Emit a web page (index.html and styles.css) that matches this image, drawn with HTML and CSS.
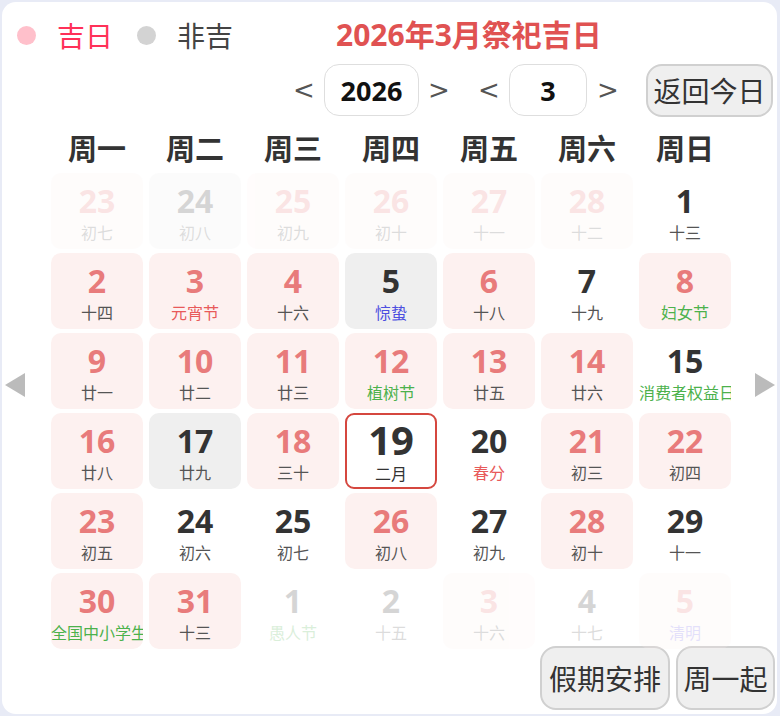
FILE: index.html
```html
<!DOCTYPE html>
<html lang="zh">
<head>
<meta charset="utf-8">
<link rel="stylesheet" href="styles.css">
</head>
<body>
<div class="panel">
  <div class="topbar">
    <span class="dot dot-good"></span><span class="legend legend-good">吉日</span>
    <span class="dot dot-bad"></span><span class="legend legend-bad">非吉</span>
    <span class="title">2026年3月祭祀吉日</span>
  </div>
  <div class="nav">
    <span class="chev chev-a">&lt;</span>
    <span class="box box-year">2026</span>
    <span class="chev chev-b">&gt;</span>
    <span class="chev chev-c">&lt;</span>
    <span class="box box-month">3</span>
    <span class="chev chev-d">&gt;</span>
    <span class="btn btn-today">返回今日</span>
  </div>
  <div class="weekdays">
    <span>周一</span><span>周二</span><span>周三</span><span>周四</span><span>周五</span><span>周六</span><span>周日</span>
  </div>
  <div class="body">
    <div class="side side-left">
      <svg width="20" height="24" viewBox="0 0 20 24"><polygon points="20,0 20,24 0,12" fill="#bbbbbb"/></svg>
    </div>
    <div class="grid">
      <div class="cell red faded"><div class="num">23</div><div class="lunar">初七</div></div>
      <div class="cell gray faded"><div class="num">24</div><div class="lunar">初八</div></div>
      <div class="cell red faded"><div class="num">25</div><div class="lunar">初九</div></div>
      <div class="cell red faded"><div class="num">26</div><div class="lunar">初十</div></div>
      <div class="cell red faded"><div class="num">27</div><div class="lunar">十一</div></div>
      <div class="cell red faded"><div class="num">28</div><div class="lunar">十二</div></div>
      <div class="cell"><div class="num">1</div><div class="lunar">十三</div></div>

      <div class="cell red"><div class="num">2</div><div class="lunar">十四</div></div>
      <div class="cell red"><div class="num">3</div><div class="lunar fest-red">元宵节</div></div>
      <div class="cell red"><div class="num">4</div><div class="lunar">十六</div></div>
      <div class="cell gray"><div class="num">5</div><div class="lunar fest-blue">惊蛰</div></div>
      <div class="cell red"><div class="num">6</div><div class="lunar">十八</div></div>
      <div class="cell"><div class="num">7</div><div class="lunar">十九</div></div>
      <div class="cell red"><div class="num">8</div><div class="lunar fest-green">妇女节</div></div>

      <div class="cell red"><div class="num">9</div><div class="lunar">廿一</div></div>
      <div class="cell red"><div class="num">10</div><div class="lunar">廿二</div></div>
      <div class="cell red"><div class="num">11</div><div class="lunar">廿三</div></div>
      <div class="cell red"><div class="num">12</div><div class="lunar fest-green">植树节</div></div>
      <div class="cell red"><div class="num">13</div><div class="lunar">廿五</div></div>
      <div class="cell red"><div class="num">14</div><div class="lunar">廿六</div></div>
      <div class="cell"><div class="num">15</div><div class="lunar fest-green">消费者权益日</div></div>

      <div class="cell red"><div class="num">16</div><div class="lunar">廿八</div></div>
      <div class="cell gray"><div class="num">17</div><div class="lunar">廿九</div></div>
      <div class="cell red"><div class="num">18</div><div class="lunar">三十</div></div>
      <div class="cell today"><div class="num">19</div><div class="lunar">二月</div></div>
      <div class="cell"><div class="num">20</div><div class="lunar fest-red">春分</div></div>
      <div class="cell red"><div class="num">21</div><div class="lunar">初三</div></div>
      <div class="cell red"><div class="num">22</div><div class="lunar">初四</div></div>

      <div class="cell red"><div class="num">23</div><div class="lunar">初五</div></div>
      <div class="cell"><div class="num">24</div><div class="lunar">初六</div></div>
      <div class="cell"><div class="num">25</div><div class="lunar">初七</div></div>
      <div class="cell red"><div class="num">26</div><div class="lunar">初八</div></div>
      <div class="cell"><div class="num">27</div><div class="lunar">初九</div></div>
      <div class="cell red"><div class="num">28</div><div class="lunar">初十</div></div>
      <div class="cell"><div class="num">29</div><div class="lunar">十一</div></div>

      <div class="cell red"><div class="num">30</div><div class="lunar fest-green">全国中小学生安全教育日</div></div>
      <div class="cell red"><div class="num">31</div><div class="lunar">十三</div></div>
      <div class="cell faded"><div class="num">1</div><div class="lunar fest-green">愚人节</div></div>
      <div class="cell faded"><div class="num">2</div><div class="lunar">十五</div></div>
      <div class="cell red faded"><div class="num">3</div><div class="lunar">十六</div></div>
      <div class="cell faded"><div class="num">4</div><div class="lunar">十七</div></div>
      <div class="cell red faded"><div class="num">5</div><div class="lunar fest-purple">清明</div></div>
    </div>
    <div class="side side-right">
      <svg width="20" height="24" viewBox="0 0 20 24"><polygon points="0,0 0,24 20,12" fill="#bbbbbb"/></svg>
    </div>
  </div>
  <div class="footer">
    <span class="btn btn-holiday">假期安排</span>
    <span class="btn btn-week">周一起</span>
  </div>
</div>
</body>
</html>
```

FILE: styles.css
```css
* { box-sizing: border-box; }
html, body { margin: 0; padding: 0; }
body {
  background: #e8ebf6;
  width: 780px;
  height: 716px;
  padding: 2px 3px 2px 2px;
  font-family: "Noto Sans CJK SC", "Noto Sans", sans-serif;
  color: #333;
}
.panel {
  background: #ffffff;
  width: 775px;
  height: 712px;
  border-radius: 14px;
  overflow: hidden;
}
.topbar {
  display: flex;
  align-items: center;
  height: 46px;
  margin-top: 10px;
  padding-left: 15px;
}
.dot {
  width: 19px;
  height: 19px;
  border-radius: 50%;
  flex: none;
}
.dot-good { background: #ffc0cb; }
.dot-bad { background: #d3d3d3; margin-left: 24px; }
.legend {
  font-size: 28px;
  line-height: 40px;
  margin-left: 21px;
}
.legend-good { color: #ff3158; }
.legend-bad { color: #444444; }
.title {
  margin-left: 103px;
  font-family: "Open Sans", "Noto Sans CJK SC", sans-serif;
  font-size: 30px;
  font-weight: bold;
  color: #e05252;
  line-height: 40px;
}
.nav {
  display: flex;
  align-items: center;
  height: 54px;
  margin-top: 5px;
}
.chev {
  width: 20px;
  text-align: center;
  font-size: 26px;
  color: #555;
  font-family: "DejaVu Sans", sans-serif;
  line-height: 30px;
}
.chev-a { margin-left: 291px; }
.chev-b { margin-left: 9px; }
.chev-c { margin-left: 30px; }
.chev-d { margin-left: 10px; }
.box {
  height: 52px;
  border: 1.5px solid #dedede;
  border-radius: 15px;
  font-family: "Open Sans", sans-serif;
  font-size: 27px;
  font-weight: bold;
  color: #111;
  display: flex;
  align-items: center;
  justify-content: center;
}
.box-year { width: 95px; margin-left: 11px; }
.box-month { width: 78px; margin-left: 11px; }
.btn {
  background: #efefef;
  border: 2px solid #d0d0d0;
  border-radius: 16px;
  font-size: 28px;
  color: #333;
  display: flex;
  align-items: center;
  justify-content: center;
}
.btn-today { width: 127px; height: 53px; margin-left: 29px; }
.weekdays {
  display: grid;
  grid-template-columns: repeat(7, 92px);
  column-gap: 6px;
  margin-top: 10px;
  padding-left: 49px;
  padding-top: 2px;
  height: 40px;
  align-items: start;
}
.weekdays span {
  text-align: center;
  font-size: 29px;
  font-weight: bold;
  color: #333;
  line-height: 36px;
}
.body {
  display: flex;
  margin-top: 6px;
}
.side {
  flex: none;
  padding-top: 200px;
}
.side-left { width: 49px; padding-left: 3px; }
.side-right { width: 46px; padding-left: 24px; }
.side svg { display: block; }
.grid {
  display: grid;
  grid-template-columns: repeat(7, 92px);
  grid-auto-rows: 76px;
  gap: 4px 6px;
}
.cell {
  border-radius: 10px;
  text-align: center;
  overflow: hidden;
  padding-top: 9px;
}
.cell.red { background: #fdf1f0; }
.cell.gray { background: #efefef; }
.cell.today {
  border: 2px solid #d5473f;
  border-radius: 9px;
  padding-top: 2px;
}
.cell.faded { opacity: 0.2; }
.num {
  font-family: "Open Sans", sans-serif;
  font-size: 32px;
  font-weight: bold;
  line-height: 38px;
  color: #333;
}
.cell.red .num { color: #e87b7b; }
.cell.today .num { font-size: 40px; line-height: 46px; }
.lunar {
  font-size: 16px;
  line-height: 22px;
  color: #555;
  white-space: nowrap;
  text-align: center;
  margin-top: 1px;
}
.cell.today .lunar { margin-top: 0; color: #333; line-height: 20px; }
.lunar.fest-red { color: #e85a5a; }
.lunar.fest-blue { color: #4d4fe0; }
.lunar.fest-green { color: #4cb14c; }
.lunar.fest-purple { color: #7a6ae8; }
.footer {
  display: flex;
  justify-content: flex-end;
  margin-top: -3px;
  padding-right: 2px;
  gap: 6px;
}
.btn-holiday { width: 130px; height: 64px; }
.btn-week { width: 99px; height: 64px; }
```
